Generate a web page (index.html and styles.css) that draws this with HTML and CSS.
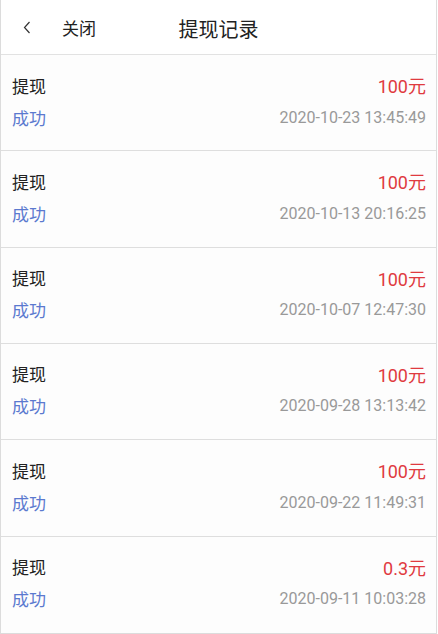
FILE: index.html
```html
<!DOCTYPE html>
<html lang="zh">
<head>
<meta charset="utf-8">
<title>提现记录</title>
<link rel="stylesheet" href="styles.css">
</head>
<body>
<div class="page">
  <header class="topbar">
    <div class="left">
      <svg class="back" width="8" height="13" viewBox="0 0 8 13"><polyline points="6.5,1 1.5,6.5 6.5,12" fill="none" stroke="#333" stroke-width="1.2"/></svg>
      <span class="close">关闭</span>
    </div>
    <div class="title">提现记录</div>
  </header>
  <ul class="list">
    <li class="item"><div class="row"><span class="type">提现</span><span class="amount">100元</span></div><div class="row"><span class="status">成功</span><span class="time">2020-10-23 13:45:49</span></div></li>
    <li class="item"><div class="row"><span class="type">提现</span><span class="amount">100元</span></div><div class="row"><span class="status">成功</span><span class="time">2020-10-13 20:16:25</span></div></li>
    <li class="item"><div class="row"><span class="type">提现</span><span class="amount">100元</span></div><div class="row"><span class="status">成功</span><span class="time">2020-10-07 12:47:30</span></div></li>
    <li class="item"><div class="row"><span class="type">提现</span><span class="amount">100元</span></div><div class="row"><span class="status">成功</span><span class="time">2020-09-28 13:13:42</span></div></li>
    <li class="item"><div class="row"><span class="type">提现</span><span class="amount">100元</span></div><div class="row"><span class="status">成功</span><span class="time">2020-09-22 11:49:31</span></div></li>
    <li class="item"><div class="row"><span class="type">提现</span><span class="amount">0.3元</span></div><div class="row"><span class="status">成功</span><span class="time">2020-09-11 10:03:28</span></div></li>
  </ul>
</div>
</body>
</html>
```
FILE: styles.css
```css
html, body {
  margin: 0;
  padding: 0;
  background: #ffffff;
}
body {
  font-family: Roboto, "Noto Sans CJK SC", sans-serif;
  color: #222;
}
.page {
  width: 437px;
  box-sizing: border-box;
  border-left: 1px solid #dcdcdc;
  border-right: 1px solid #dcdcdc;
  border-bottom: 1px solid #dcdcdc;
  background: #fdfdfd;
}
.topbar {
  position: relative;
  height: 55px;
  box-sizing: border-box;
  border-bottom: 1px solid #e2e2e2;
  background: #fff;
  display: flex;
  align-items: center;
  justify-content: center;
}
.left {
  position: absolute;
  left: 22px;
  top: 0;
  height: 54px;
  display: flex;
  align-items: center;
}
.back {
  display: block;
  margin-top: 1px;
}
.close {
  margin-left: 31px;
  font-size: 17px;
  color: #222;
}
.title {
  font-size: 20px;
  color: #222;
  margin-top: 2px;
}
.list {
  list-style: none;
  margin: 0;
  padding: 0;
}
.item {
  height: 96.33px;
  box-sizing: border-box;
  padding: 18px 10px 0 11px;
  border-bottom: 1px solid #dedede;
  display: flex;
  flex-direction: column;
  gap: 8px;
}
.item:last-child {
  border-bottom: none;
}
.row {
  display: flex;
  justify-content: space-between;
  align-items: center;
  height: 24px;
}
.type {
  font-size: 17px;
  color: #222;
}
.status {
  font-size: 17px;
  color: #5b79cf;
}
.amount {
  font-size: 18px;
  color: #e03a40;
}
.time {
  font-size: 16px;
  color: #999;
}
```
